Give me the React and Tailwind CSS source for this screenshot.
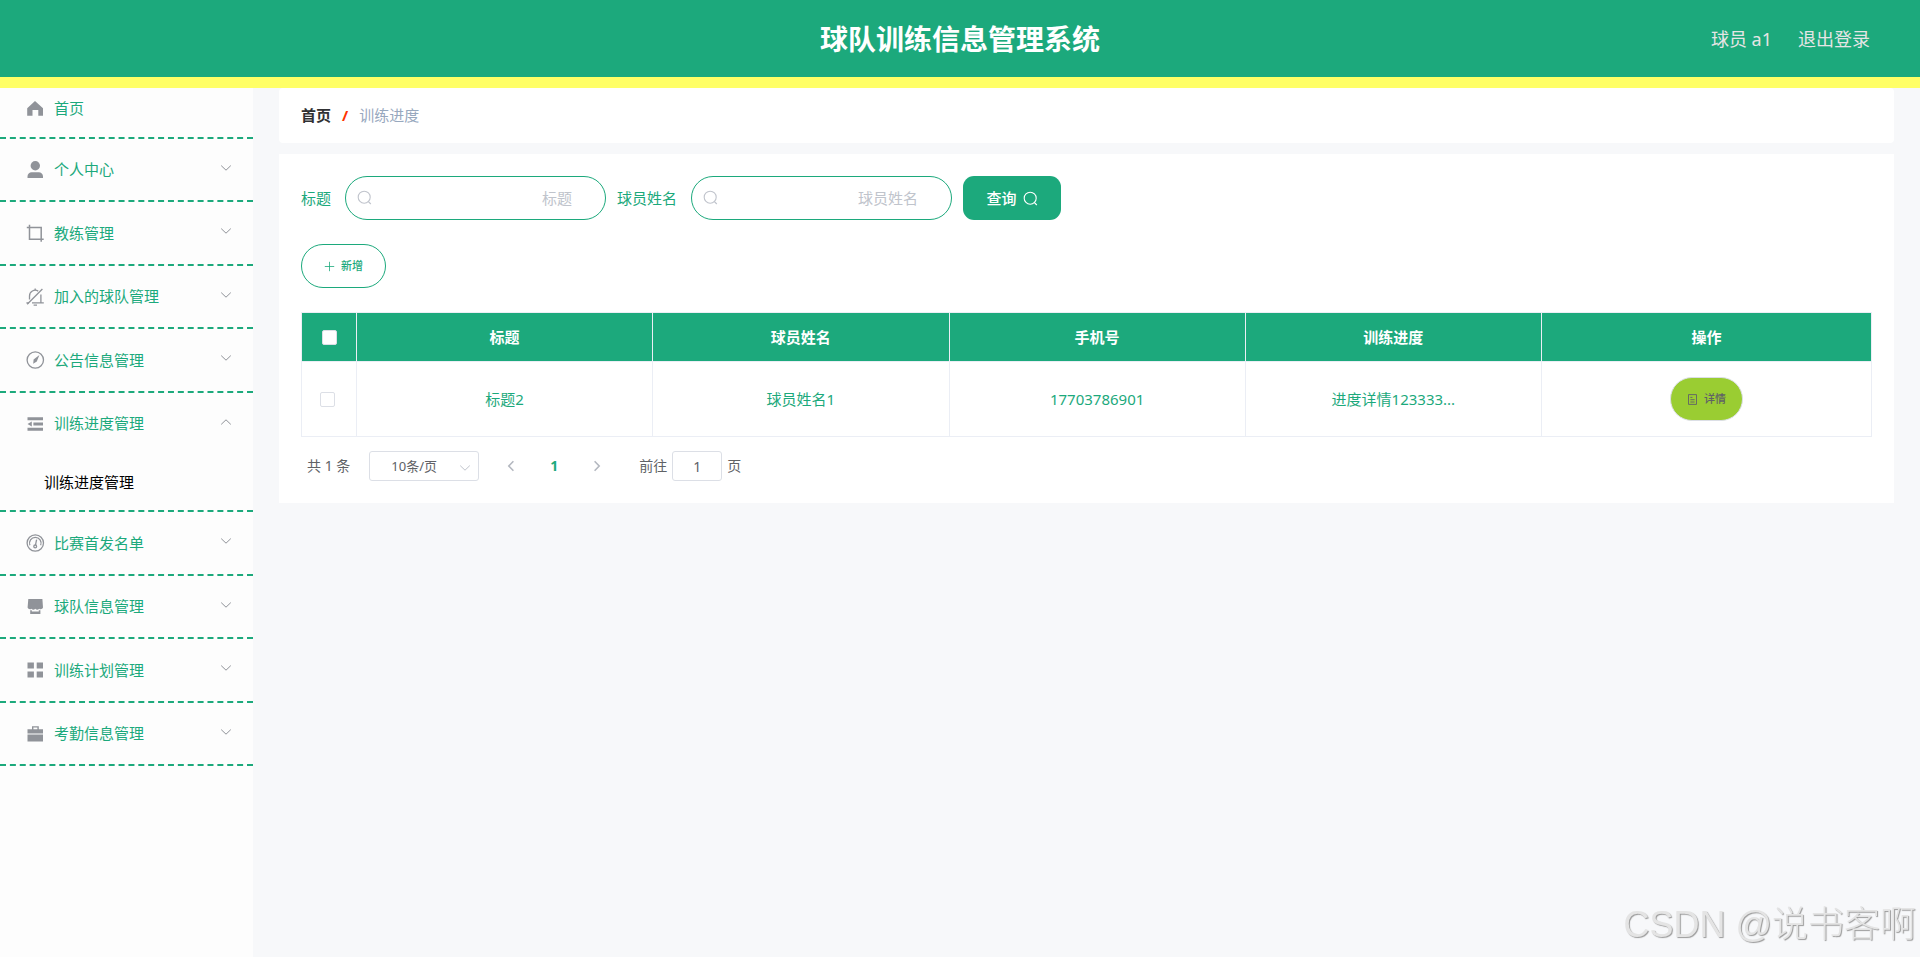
import { useState } from "react";

const icons = {
  home: (
    <path d="M9 1 17 8.2V15.8H12.3V10H6.5V15.8H1.2V8.2Z" fill="currentColor" />
  ),
  user: (
    <g fill="currentColor">
      <circle cx="9.3" cy="4.8" r="4.7" />
      <path d="M1.5 17v-1.6a4.2 4.2 0 0 1 4.2-4.2h7.1a4.2 4.2 0 0 1 4.2 4.2V17Z" />
    </g>
  ),
  crop: (
    <path
      d="M3.5 .8V15.2H17.7M.8 3.5H15.2V17.7"
      fill="none"
      stroke="currentColor"
      strokeWidth="1.5"
    />
  ),
  bellOff: (
    <g fill="none" stroke="currentColor" strokeWidth="1.3">
      <path d="M3.5 11.6V8A5.7 5.7 0 0 1 12.2 3.1M14.9 6.6V14.6M6 14.9H17.8M.4 14.9H3" />
      <path d="M1.2 16.2 16.4 1M9.2 .4V2.2M7.6 17.2H11" />
    </g>
  ),
  compass: (
    <g>
      <circle cx="9.3" cy="9" r="8.2" fill="none" stroke="currentColor" strokeWidth="1.3" />
      <path d="M13.4 4 10.8 10.6 7.2 12.8 7.6 8.4Z" fill="currentColor" />
    </g>
  ),
  fold: (
    <path
      d="M1.5 2.3H17V5.2H1.5ZM7.4 7.6H17V10.4H7.4ZM1.5 12.8H17V15.7H1.5ZM1.5 9 5.8 6.4V11.6Z"
      fill="currentColor"
    />
  ),
  odometer: (
    <g fill="none" stroke="currentColor" strokeWidth="1.3">
      <circle cx="9.3" cy="9" r="8.2" />
      <path d="M3.9 11.2A5.8 5.8 0 1 1 14.7 11.2" />
      <path d="M10.6 5.6 9.5 11" />
      <circle cx="9.2" cy="12.4" r="1.4" />
    </g>
  ),
  shop: (
    <g fill="currentColor">
      <path d="M2.3 1H16.4L17 9.4A2.4 2.4 0 0 1 13.2 10.7 2.6 2.6 0 0 1 9.3 10.7 2.6 2.6 0 0 1 5.4 10.7 2.4 2.4 0 0 1 1.6 9.4Z" />
      <path d="M4.2 12.2H5.8V13.6H12.8V12.2H14.4V16H4.2Z" />
    </g>
  ),
  grid: (
    <path
      d="M1.5 1.4H7.9V7.4H1.5ZM10.7 1.4H17V7.4H10.7ZM1.5 10.6H7.9V16.5H1.5ZM10.7 10.6H17V16.5H10.7Z"
      fill="currentColor"
    />
  ),
  briefcase: (
    <path
      d="M6 1.2H12.8V4.2H17V8.4H1.5V4.2H6ZM7.4 2.5V4.2H11.4V2.5ZM1.5 9.5H17V16.5H1.5Z"
      fill="currentColor"
      fillRule="evenodd"
    />
  ),
};

const menu = [
  { name: "个人中心", icon: "user" },
  { name: "教练管理", icon: "crop" },
  { name: "加入的球队管理", icon: "bellOff" },
  { name: "公告信息管理", icon: "compass" },
  { name: "训练进度管理", icon: "fold", children: ["训练进度管理"] },
  { name: "比赛首发名单", icon: "odometer" },
  { name: "球队信息管理", icon: "shop" },
  { name: "训练计划管理", icon: "grid" },
  { name: "考勤信息管理", icon: "briefcase" },
];

const columns = ["标题", "球员姓名", "手机号", "训练进度"];

const rows = [
  { id: 1, cells: ["标题2", "球员姓名1", "17703786901", "进度详情123333..."] },
];

function MenuIcon({ name }) {
  return (
    <span className="flex w-[26px] justify-center text-[#909399]">
      <svg viewBox="0 0 18 18" className="h-[18px] w-[18px] overflow-visible">
        {icons[name]}
      </svg>
    </span>
  );
}

function Chevron({ className, strokeWidth = 1 }) {
  return (
    <svg viewBox="0 0 12 12" className={className}>
      <path
        d="M1.2 3.6 6 8.2 10.8 3.6"
        fill="none"
        stroke="currentColor"
        strokeWidth={strokeWidth}
      />
    </svg>
  );
}

function SearchIcon({ className }) {
  return (
    <svg viewBox="0 0 15 15" className={className}>
      <circle cx="7.2" cy="7.2" r="6" fill="none" stroke="currentColor" strokeWidth="1.1" />
      <path d="M11.2 11.4 13.8 14" stroke="currentColor" strokeWidth="1.2" />
    </svg>
  );
}

function SearchField({ id, label, value, onChange }) {
  return (
    <div className="flex items-center gap-[14px]">
      <label htmlFor={id} className="text-[#1ca97c]">
        {label}
      </label>
      <div className="relative">
        <SearchIcon className="absolute top-[14px] left-3 h-[15px] w-[15px] text-[#c0c4cc]" />
        <input
          id={id}
          type="text"
          placeholder={label}
          value={value}
          onChange={onChange}
          className="h-11 w-[261px] rounded-full border border-[#1ca97c] bg-white pr-[33px] pl-8 text-right text-[#1ca97c] outline-none placeholder:text-[#c0c4cc]"
        />
      </div>
    </div>
  );
}

function Checkbox({ label }) {
  return (
    <input
      type="checkbox"
      aria-label={label}
      className="block h-[15px] w-[15px] appearance-none rounded-[2px] border border-[#dcdfe6] bg-white checked:bg-[#1ca97c]"
    />
  );
}

function Header() {
  return (
    <header className="grid h-[88px] grid-cols-[1fr_auto_1fr] items-center border-b-[11px] border-[#ffff66] bg-[#1ca97c] px-[50px]">
      <h1 className="col-start-2 text-[28px] font-bold text-white">
        球队训练信息管理系统
      </h1>
      <div className="flex justify-end gap-[26px] text-lg text-[#e5e5e5]">
        <span>球员 a1</span>
        <a href="#logout">退出登录</a>
      </div>
    </header>
  );
}

function Sidebar() {
  const [opened, setOpened] = useState("训练进度管理");

  return (
    <nav className="w-[253px] shrink-0 bg-[#fdfdfd] text-[#1ca97c]">
      <ul>
        <li className="border-b-2 border-dashed border-[#1ca97c]">
          <a href="#home" className="flex h-[49px] items-center gap-[6px] pb-2 pl-[22px]">
            <MenuIcon name="home" />
            首页
          </a>
        </li>
        {menu.map((item) => {
          const isOpen = opened === item.name && item.children;
          return (
            <li key={item.name} className="group border-b-2 border-dashed border-[#1ca97c]">
              <button
                type="button"
                aria-expanded={!!isOpen}
                onClick={() => setOpened(isOpen ? "" : item.name)}
                className="flex h-[62px] w-full cursor-pointer items-center gap-[6px] pr-[21px] pl-[22px] group-even:h-[61px]"
              >
                <MenuIcon name={item.icon} />
                {item.name}
                <Chevron
                  className={
                    isOpen
                      ? "mb-1 ml-auto h-3 w-3 rotate-180 text-[#909399]"
                      : "mb-1 ml-auto h-3 w-3 text-[#909399]"
                  }
                />
              </button>
              {isOpen && (
                <ul>
                  {item.children.map((child) => (
                    <li key={child}>
                      <a href="#progress" className="flex h-14 items-center pl-11 text-black">
                        {child}
                      </a>
                    </li>
                  ))}
                </ul>
              )}
            </li>
          );
        })}
      </ul>
    </nav>
  );
}

function DataTable() {
  return (
    <table className="w-full table-fixed border-collapse border border-[#ebeef5] text-center">
      <colgroup>
        <col className="w-[55px]" />
        {columns.map((column) => (
          <col key={column} />
        ))}
        <col className="w-[330px]" />
      </colgroup>
      <thead>
        <tr className="h-[49px] bg-[#1ca97c] text-white">
          <th className="border border-[#ebeef5]">
            <div className="flex justify-center">
              <Checkbox label="全选" />
            </div>
          </th>
          {columns.map((column) => (
            <th key={column} className="border border-[#ebeef5] font-bold">
              {column}
            </th>
          ))}
          <th className="border border-[#ebeef5] font-bold">操作</th>
        </tr>
      </thead>
      <tbody>
        {rows.map((row) => (
          <tr key={row.id} className="h-[75px] text-[#1ca97c]">
            <td className="border border-[#ebeef5] pr-1">
              <div className="flex justify-center">
                <Checkbox label={row.cells[0]} />
              </div>
            </td>
            {row.cells.map((cell) => (
              <td key={cell} className="border border-[#ebeef5]">
                {cell}
              </td>
            ))}
            <td className="border border-[#ebeef5]">
              <button
                type="button"
                className="inline-flex h-11 w-[73px] cursor-pointer items-center justify-center gap-[6px] rounded-full border border-[#dcdfe6] bg-[#9acd32] align-middle text-[11px] font-medium text-[#606266]"
              >
                <svg viewBox="0 0 11 11" className="h-[11px] w-[11px]">
                  <path
                    d="M1.5 .6H9.5V10.4H1.5ZM3.4 3.4H5.4M3.4 5.7H7.6M3.4 8H7.6"
                    fill="none"
                    stroke="currentColor"
                    strokeWidth="0.9"
                  />
                </svg>
                详情
              </button>
            </td>
          </tr>
        ))}
      </tbody>
    </table>
  );
}

function Pagination() {
  const [page, setPage] = useState("1");

  return (
    <div className="mt-[14px] flex h-[30px] items-center pl-[6px] text-sm text-[#606266]">
      <span>共 1 条</span>
      <div className="relative ml-[19px]">
        <select
          aria-label="每页条数"
          className="h-[30px] w-[110px] appearance-none rounded-[3px] border border-[#dcdfe6] bg-white pl-[21px] text-[13px] outline-none"
        >
          <option>10条/页</option>
          <option>20条/页</option>
          <option>50条/页</option>
        </select>
        <Chevron className="pointer-events-none absolute top-[11px] right-2 h-3 w-3 text-[#c0c4cc]" />
      </div>
      <button type="button" aria-label="上一页" disabled className="ml-[26px] text-[#b4b8c0]">
        <Chevron className="h-3 w-3 rotate-90" strokeWidth={1.6} />
      </button>
      <button type="button" className="w-[74px] font-bold text-[#1ca97c]">
        1
      </button>
      <button type="button" aria-label="下一页" disabled className="text-[#b4b8c0]">
        <Chevron className="h-3 w-3 -rotate-90" strokeWidth={1.6} />
      </button>
      <label htmlFor="jump" className="ml-9">
        前往
      </label>
      <input
        id="jump"
        type="text"
        value={page}
        onChange={(e) => setPage(e.target.value)}
        className="mx-[5px] h-[30px] w-[50px] rounded-[3px] border border-[#dcdfe6] text-center outline-none"
      />
      <span>页</span>
    </div>
  );
}

export default function App() {
  const [title, setTitle] = useState("");
  const [player, setPlayer] = useState("");

  return (
    <div className="flex min-h-screen flex-col bg-[#f7f8fa] font-['Noto_Sans','Noto_Sans_CJK_SC',sans-serif] text-[15px]">
      <Header />
      <div className="flex grow">
        <Sidebar />
        <main className="min-w-0 grow px-[26px]">
          <div className="flex h-[55px] items-center gap-[11px] rounded bg-white px-[22px]">
            <a href="#home" className="font-bold text-[#303133]">
              首页
            </a>
            <span className="font-bold text-[#ff3300]">/</span>
            <span className="text-[#97a8be]">训练进度</span>
          </div>

          <section className="mt-[11px] bg-white p-[22px]">
            <form
              className="flex flex-wrap items-center gap-[11px]"
              onSubmit={(e) => e.preventDefault()}
            >
              <SearchField
                id="title"
                label="标题"
                value={title}
                onChange={(e) => setTitle(e.target.value)}
              />
              <SearchField
                id="player"
                label="球员姓名"
                value={player}
                onChange={(e) => setPlayer(e.target.value)}
              />
              <button
                type="submit"
                className="flex h-11 w-[98px] cursor-pointer items-center justify-center gap-[6px] rounded-[11px] bg-[#1ca97c] font-medium text-white"
              >
                查询
                <SearchIcon className="h-[15px] w-[15px]" />
              </button>
            </form>

            <button
              type="button"
              className="my-6 flex h-11 w-[85px] cursor-pointer items-center justify-center gap-[6px] rounded-full border border-[#1ca97c] bg-white text-[11px] font-medium text-[#1ca97c]"
            >
              <svg viewBox="0 0 11 11" className="h-[11px] w-[11px]">
                <path d="M5.5 .8V10.2M.8 5.5H10.2" stroke="currentColor" strokeWidth="0.8" />
              </svg>
              新增
            </button>

            <DataTable />
            <Pagination />
          </section>
        </main>
      </div>

      <div className="pointer-events-none fixed right-1 bottom-3 font-['Liberation_Sans','Noto_Sans_CJK_SC',sans-serif] text-4xl font-light text-[#e4e4e4] [text-shadow:1px_1px_1px_#999]">
        CSDN @说书客啊
      </div>
    </div>
  );
}
